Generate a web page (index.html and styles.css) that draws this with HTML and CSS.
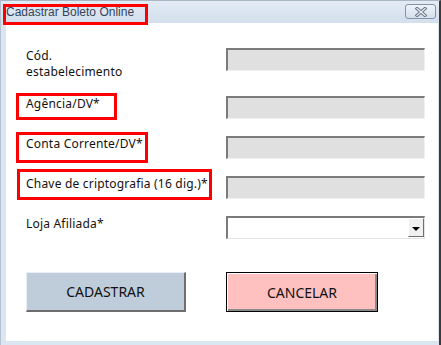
FILE: index.html
```html
<!DOCTYPE html>
<html lang="pt-BR">
<head>
    <meta charset="UTF-8">
    <meta name="viewport" content="width=device-width, initial-scale=1.0">
    <title>Cadastrar Boleto Online</title>
    <link rel="stylesheet" href="styles.css">
</head>
<body>
    <div class="window">
        <div class="titlebar">
            <span class="title mark mark-title">Cadastrar Boleto Online</span>
            <button class="close-btn" type="button" aria-label="Fechar">
                <svg width="14" height="10" viewBox="0 0 14 10">
                    <path d="M3 1.5 L11 8.5 M11 1.5 L3 8.5" stroke="#6b7a8c" stroke-width="3.2" stroke-linecap="square"/>
                    <path d="M3 1.5 L11 8.5 M11 1.5 L3 8.5" stroke="#eef2f6" stroke-width="1.2" stroke-linecap="square"/>
                </svg>
            </button>
        </div>

        <div class="client">
            <form class="form-grid" onsubmit="return false">
                <label class="field-label">Cód.<br>estabelecimento</label>
                <input class="field" type="text" disabled>

                <label class="field-label mark mark-agencia">Agência/DV*</label>
                <input class="field" type="text" disabled>

                <label class="field-label mark mark-conta">Conta Corrente/DV*</label>
                <input class="field" type="text" disabled>

                <label class="field-label mark mark-chave">Chave de criptografia (16 dig.)*</label>
                <input class="field" type="text" disabled>

                <label class="field-label">Loja Afiliada*</label>
                <div class="combo">
                    <span class="combo-btn"><span class="arrow"></span></span>
                </div>
            </form>

            <div class="actions">
                <button class="btn btn-save" type="button">CADASTRAR</button>
                <button class="btn btn-cancel" type="button">CANCELAR</button>
            </div>
        </div>
    </div>
</body>
</html>
```

FILE: styles.css
```css
body {
    margin: 0;
    font-family: "Noto Sans", "DejaVu Sans", sans-serif;
    background-color: #ffffff;
}
.window {
    width: 441px;
    height: 345px;
    box-sizing: border-box;
    background-color: #dce6f2;
    border-top: 1px solid #a9b6c6;
    border-left: 1px solid #b6c2d0;
    border-right: 2px solid #3a3a3a;
    display: flex;
    flex-direction: column;
}
.titlebar {
    height: 22px;
    display: flex;
    align-items: flex-start;
    justify-content: space-between;
    background: linear-gradient(#e3ebf5, #d3dfed);
}
.title {
    font-family: "Liberation Sans", Arial, sans-serif;
    font-size: 12px;
    color: #34435a;
    margin: 4px 0 0 5px;
    line-height: 15px;
}
.close-btn {
    width: 31px;
    height: 15px;
    margin: 3px 3px 0 0;
    padding: 0;
    border: 1px solid #8393a8;
    border-radius: 3px;
    background: linear-gradient(#eef3f9, #d5dfeb);
    display: flex;
    align-items: center;
    justify-content: center;
}
.client {
    flex: 1;
    margin: 0 1px 4px 5px;
    background-color: #ffffff;
    padding: 25px 0 0 20px;
}
.form-grid {
    display: grid;
    grid-template-columns: 200px 199px;
    grid-template-rows: 48px 40px 40px 40px 40px;
    margin: 0;
}
.field-label {
    font-size: 12px;
    letter-spacing: 0.2px;
    line-height: 16px;
    color: #111;
    align-self: start;
}
.field {
    height: 23px;
    box-sizing: border-box;
    margin: 0;
    padding: 0;
    background-color: #e0e0e0;
    border-top: 2px solid #7b7b7b;
    border-left: 2px solid #7b7b7b;
    border-bottom: 1px solid #f0f0f0;
    border-right: 1px solid #f0f0f0;
}
.combo {
    height: 23px;
    box-sizing: border-box;
    background-color: #ffffff;
    border-top: 2px solid #7b7b7b;
    border-left: 2px solid #7b7b7b;
    border-bottom: 1px solid #e4e4e4;
    border-right: 1px solid #e4e4e4;
    display: flex;
    justify-content: flex-end;
    padding: 0 0 1px 0;
}
.combo-btn {
    width: 16px;
    box-sizing: border-box;
    background-color: #f0f0f0;
    border-top: 1px solid #ffffff;
    border-left: 1px solid #ffffff;
    border-right: 1px solid #6f6f6f;
    border-bottom: 1px solid #6f6f6f;
    display: flex;
    align-items: center;
    justify-content: center;
}
.arrow {
    width: 0;
    height: 0;
    border-left: 4px solid transparent;
    border-right: 4px solid transparent;
    border-top: 4px solid #000;
    margin-top: 2px;
}
.actions {
    display: flex;
    gap: 40px;
    margin-top: 16px;
}
.btn {
    height: 40px;
    font-family: "Noto Sans", "DejaVu Sans", sans-serif;
    font-size: 14px;
    color: #111;
    padding: 0;
    box-sizing: border-box;
}
.btn-save {
    width: 160px;
    background-color: #bfcddb;
    border-top: 1px solid #e8eef4;
    border-left: 1px solid #e8eef4;
    border-right: 2px solid #6e6e6e;
    border-bottom: 2px solid #6e6e6e;
}
.btn-cancel {
    width: 152px;
    background-color: #ffc0c0;
    border: 1px solid #000;
    box-shadow: inset 1px 1px 0 #ffffff, inset -2px -2px 0 #8a8a8a;
}

/* red highlight boxes drawn over the screenshot */
.mark {
    position: relative;
}
.mark::after {
    content: "";
    position: absolute;
    border: 3px solid #ff0000;
    box-sizing: border-box;
}
.mark-title::after {
    left: -3px;
    top: -1px;
    width: 145px;
    height: 21px;
}
.mark-agencia::after {
    left: -10px;
    top: -3px;
    width: 101px;
    height: 27px;
}
.mark-conta::after {
    left: -10px;
    top: -4px;
    width: 132px;
    height: 31px;
}
.mark-chave::after {
    left: -9px;
    top: -7px;
    width: 195px;
    height: 31px;
}
```
